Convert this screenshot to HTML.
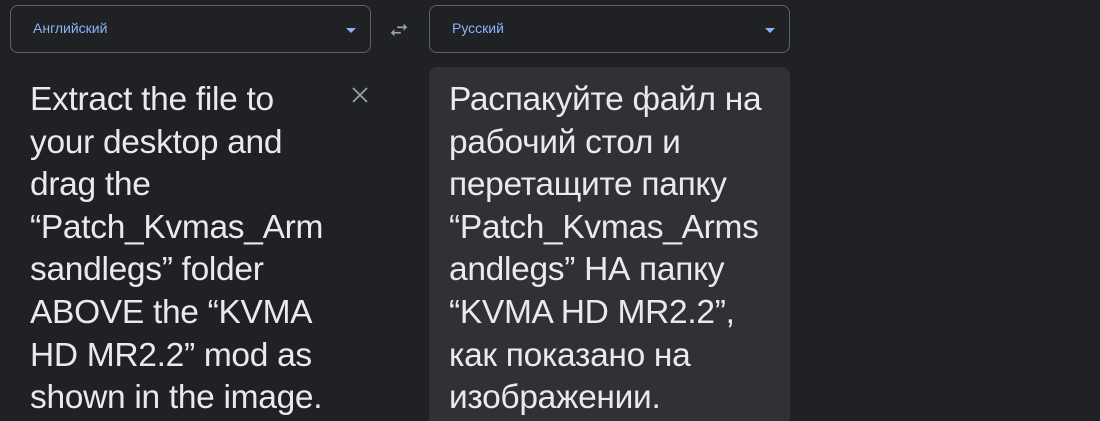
<!DOCTYPE html>
<html><head><style>
html,body{margin:0;width:1100px;height:421px;overflow:hidden;background:#202124;font-family:"Liberation Sans",Arial,sans-serif;position:relative}
.sel{position:absolute;top:5px;height:48px;border:1px solid #5f6368;border-radius:8px;box-sizing:border-box;width:361px}
.sel span{position:absolute;left:22px;top:14px;font-size:14px;color:#8ab4f8}
.sel i{position:absolute;right:14px;top:22px;width:0;height:0;border-left:5px solid transparent;border-right:5px solid transparent;border-top:5px solid #8ab4f8}
.txt{position:absolute;top:79px;font-size:33.5px;line-height:42.6px;color:#e8eaed;white-space:pre;letter-spacing:-0.3px}
.out{position:absolute;left:429px;top:67px;width:361px;height:360px;background:#303134;border-radius:8px}
</style></head><body>
<div class="sel" style="left:10px"><span>Английский</span><i></i></div>
<svg style="position:absolute;left:388px;top:19px" width="22" height="22" viewBox="0 0 24 24"><path fill="#9aa0a6" d="M6.99 11L3 15l3.99 4v-3H14v-2H6.99v-3zM21 9l-3.99-4v3H10v2h7.01v3L21 9z"/></svg>
<div class="sel" style="left:429px"><span>Русский</span><i></i></div>
<div class="txt" style="left:30px">Extract the file to
your desktop and
drag the
“Patch_Kvmas_Arm
sandlegs” folder
ABOVE the “KVMA
HD MR2.2” mod as
shown in the image.</div>
<svg style="position:absolute;left:351px;top:86px" width="18" height="18" viewBox="0 0 18 18"><path d="M2 2L16 16M16 2L2 16" stroke="#9aa0a6" stroke-width="1.8"/></svg>
<div class="out"></div>
<div class="txt" style="left:449px">Распакуйте файл на
рабочий стол и
перетащите папку
“Patch_Kvmas_Arms
andlegs” НА папку
“KVMA HD MR2.2”,
как показано на
изображении.</div>
</body></html>
